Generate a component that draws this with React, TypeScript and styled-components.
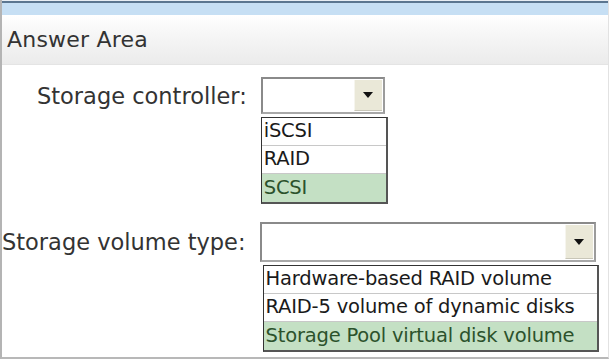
import React from "react"
import styled, { createGlobalStyle } from "styled-components"

const Global = createGlobalStyle`
  html, body {
    margin: 0;
    padding: 0;
    background: #fff;
  }
  body {
    width: 610px;
    height: 359px;
    overflow: hidden;
  }
`

interface Option {
  label: string
  selected?: boolean
}

interface FieldProps {
  label: string
  indent: number
  width: number
  height: number
  listWidth: number
  listOffset: number
  options: Option[]
}

const Field: React.FC<FieldProps> = (props) => {
  const { label, indent, width, height, listWidth, listOffset, options } = props
  return (
    <S.Field indent={indent}>
      <S.Label h={height}>{label}</S.Label>
      <S.Control>
        <S.Select w={width} h={height}>
          <S.SelectValue />
          <S.ArrowButton>
            <S.Arrow />
          </S.ArrowButton>
        </S.Select>
        <S.List w={listWidth} offset={listOffset}>
          {options.map((o, i) => (
            <S.Item key={i} selected={!!o.selected} last={i === options.length - 1}>
              {o.label}
            </S.Item>
          ))}
        </S.List>
      </S.Control>
    </S.Field>
  )
}

export default function App() {
  return (
    <>
      <Global />
      <S.Page>
        <S.TopBar />
        <S.Header>Answer Area</S.Header>
        <S.Body>
          <Field
            label="Storage controller:"
            indent={35}
            width={124}
            height={37}
            listWidth={127}
            listOffset={0}
            options={[{ label: "iSCSI" }, { label: "RAID" }, { label: "SCSI", selected: true }]}
          />
          <Field
            label="Storage volume type:"
            indent={0}
            width={336}
            height={40}
            listWidth={336}
            listOffset={3}
            options={[
              { label: "Hardware-based RAID volume" },
              { label: "RAID-5 volume of dynamic disks" },
              { label: "Storage Pool virtual disk volume", selected: true },
            ]}
          />
        </S.Body>
      </S.Page>
    </>
  )
}

const S = {
  Page: styled.div`
    width: 606px;
    height: 357px;
    border-left: 2px solid #b4b4b4;
    border-right: 1px solid #e2e2e2;
    border-bottom: 2px solid #b8b8b8;
    display: flex;
    flex-direction: column;
    font-family: "DejaVu Sans", Verdana, sans-serif;
    color: #333;
  `,
  TopBar: styled.div`
    height: 12px;
    border-top: 1px solid #e8eef4;
    box-shadow: inset 0 2px 0 #5b7690;
    background: #c6dff4;
    padding-top: 2px;
  `,
  Header: styled.div`
    height: 50px;
    box-sizing: border-box;
    padding-left: 5px;
    display: flex;
    align-items: center;
    font-size: 22px;
    letter-spacing: 0.2px;
    color: #333;
    background: linear-gradient(#ffffff, #f6f6f6 40%, #ebebeb);
    border-bottom: 1px solid #e4e4e4;
  `,
  Body: styled.div`
    display: flex;
    flex-direction: column;
    gap: 18px;
    padding-top: 12px;
  `,
  Field: styled.div<{ indent: number }>`
    display: flex;
    align-items: flex-start;
    gap: 14px;
    padding-left: ${({ indent }) => indent}px;
  `,
  Label: styled.span<{ h: number }>`
    height: ${({ h }) => h}px;
    display: flex;
    align-items: center;
    font-size: 22.5px;
    color: #333;
    white-space: nowrap;
  `,
  Control: styled.div`
    display: flex;
    flex-direction: column;
    gap: 3px;
  `,
  Select: styled.div<{ w: number; h: number }>`
    width: ${({ w }) => w}px;
    height: ${({ h }) => h}px;
    box-sizing: border-box;
    border: 2px solid #8a8a8a;
    border-right-color: #9c9c9c;
    border-bottom-color: #a8a8a8;
    background: #fff;
    display: flex;
    padding: 1px;
  `,
  SelectValue: styled.div`
    flex: 1;
    background: #fff;
  `,
  ArrowButton: styled.div`
    width: 27px;
    background: #eae8d8;
    border-left: 1px solid #f6f5ee;
    border-bottom: 1px solid #c8c6b8;
    display: flex;
    align-items: center;
    justify-content: center;
  `,
  Arrow: styled.div`
    width: 0;
    height: 0;
    border-left: 5px solid transparent;
    border-right: 5px solid transparent;
    border-top: 6px solid #111;
  `,
  List: styled.div<{ w: number; offset: number }>`
    width: ${({ w }) => w}px;
    margin-left: ${({ offset }) => offset}px;
    box-sizing: border-box;
    border: 1px solid #333;
    border-right: 2px solid #555;
    border-bottom: 2px solid #555;
    display: flex;
    flex-direction: column;
  `,
  Item: styled.div<{ selected: boolean; last: boolean }>`
    height: 28px;
    box-sizing: border-box;
    padding-left: 2px;
    padding-bottom: 2px;
    display: flex;
    align-items: center;
    font-size: 19.5px;
    letter-spacing: -0.2px;
    color: ${({ selected }) => (selected ? "#2c522c" : "#1a1a1a")};
    background: ${({ selected }) => (selected ? "#c4e0c4" : "#fff")};
    border-bottom: ${({ last }) => (last ? "none" : "1px solid #c8c8c8")};
  `,
}
